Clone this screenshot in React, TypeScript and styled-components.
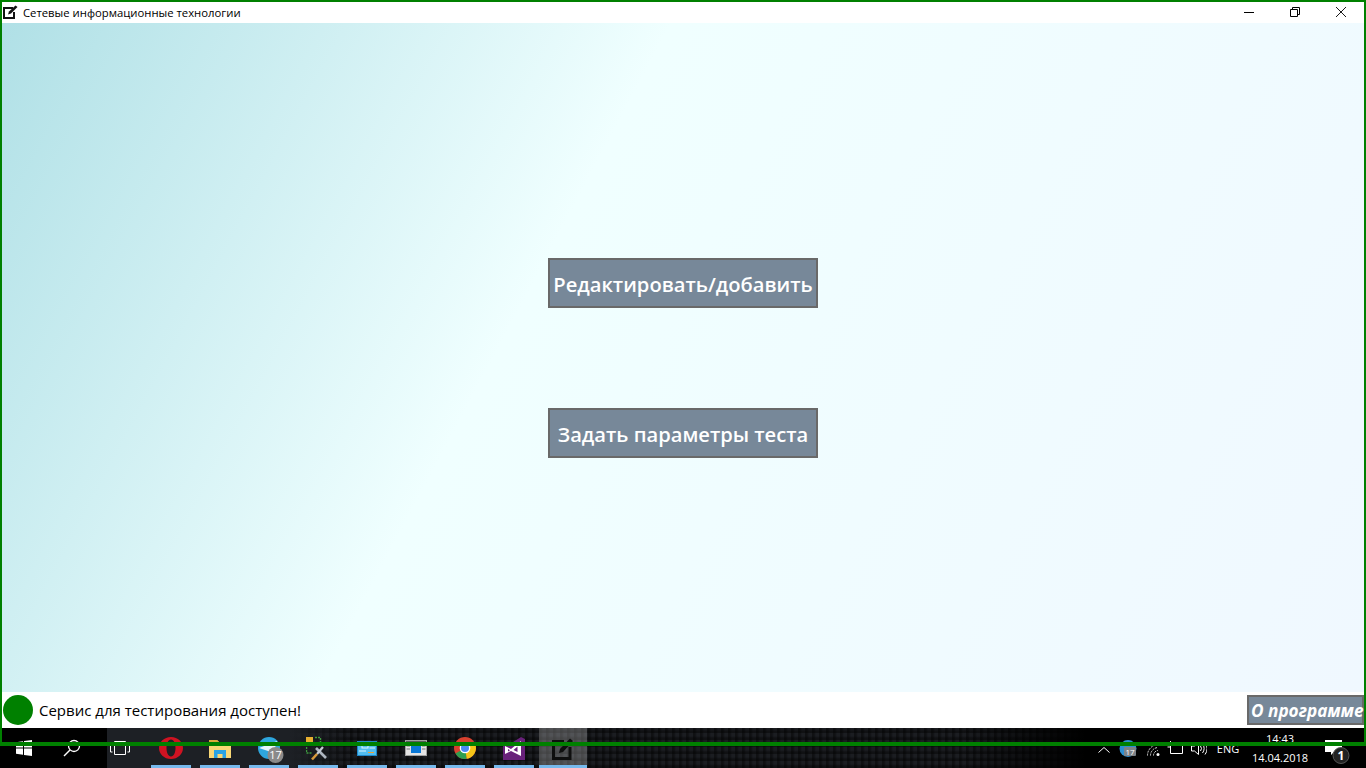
import React from "react";
import styled, { createGlobalStyle } from "styled-components";

const Global = createGlobalStyle`
  html, body { margin: 0; padding: 0; background: #000; }
  body { font-family: "Open Sans", "Noto Sans", sans-serif; }
`;

const Screen = styled.div`
  position: relative;
  width: 1366px;
  height: 768px;
  overflow: hidden;
  display: flex;
  flex-direction: column;
`;

const Frame = styled.div`
  position: absolute;
  left: 0;
  top: 0;
  width: 1366px;
  height: 746px;
  box-sizing: border-box;
  border: solid #008000;
  border-width: 2px 2px 4px 2px;
  pointer-events: none;
  z-index: 5;
`;

const Win = styled.div`
  height: 728px;
  display: flex;
  flex-direction: column;
  box-sizing: border-box;
  padding: 2px 2px 0;
  background: #fff;
`;

const TitleBar = styled.div`
  height: 21px;
  display: flex;
  align-items: center;
  background: #fff;
  color: #000;
  font-size: 11.3px;
`;

const TitleIcon = styled.svg`
  width: 17px;
  height: 17px;
  margin: 0 3px 0 1px;
  flex: none;
`;

const TitleText = styled.span`
  flex: 1;
`;

const WinCtrl = styled.div`
  width: 46px;
  height: 21px;
  display: flex;
  align-items: center;
  justify-content: center;
  margin-top: -2px;
`;

const Main = styled.main`
  flex: 1;
  display: flex;
  flex-direction: column;
  align-items: center;
  justify-content: center;
  gap: 100px;
  background: linear-gradient(118deg, #b0e0e6 0%, #f0ffff 39%, #f0f8ff 100%);
`;

const BigButton = styled.button`
  width: 270px;
  height: 50px;
  box-sizing: border-box;
  border: 2px solid #696969;
  background: #778899;
  color: #fff;
  font-family: "Open Sans", sans-serif;
  font-size: 20.15px;
  font-weight: 600;
  padding: 2px 0 0;
  white-space: nowrap;
`;

const StatusBar = styled.div`
  height: 36px;
  display: flex;
  align-items: center;
  background: #fff;
`;

const Lamp = styled.div`
  width: 30px;
  height: 30px;
  border-radius: 50%;
  background: #008000;
  margin: 0 6px 0 1px;
  flex: none;
`;

const StatusText = styled.span`
  flex: 1;
  font-size: 15px;
  color: #000;
`;

const AboutButton = styled.button`
  width: 117px;
  height: 30px;
  box-sizing: border-box;
  border: 2px solid #696969;
  background: #778899;
  color: #fff;
  font-family: "Open Sans", sans-serif;
  font-size: 17.2px;
  font-weight: 700;
  font-style: italic;
  padding: 0 0 0 2px;
  white-space: nowrap;
  text-align: left;
`;

const Taskbar = styled.div`
  height: 40px;
  display: flex;
  align-items: stretch;
  background-color: #1b1d21;
  background-image:
    linear-gradient(90deg, #1d2025 0, #1d2025 290px, rgba(29, 32, 37, 0) 350px),
    linear-gradient(90deg, rgba(0, 0, 0, 0) 960px, #000 1085px),
    repeating-linear-gradient(90deg, rgba(0, 0, 0, 0.42) 0, rgba(0, 0, 0, 0.42) 2px, rgba(0, 0, 0, 0) 4px, rgba(0, 0, 0, 0) 7px),
    repeating-linear-gradient(0deg, rgba(0, 0, 0, 0.42) 0, rgba(0, 0, 0, 0.42) 2px, rgba(0, 0, 0, 0) 4px, rgba(0, 0, 0, 0) 7px);
`;

const StartZone = styled.div`
  width: 107px;
  display: flex;
  background: #000;
`;

const SysBtn = styled.div`
  width: 48px;
  display: flex;
  align-items: center;
  justify-content: center;
  flex: none;
`;

const TaskView = styled.div`
  width: 39px;
  box-sizing: border-box;
  padding-left: 3px;
  display: flex;
  align-items: center;
  flex: none;
`;

const Tile = styled.div<{ $active?: boolean }>`
  position: relative;
  flex: none;
  display: flex;
  align-items: center;
  justify-content: center;
  background: ${(p) => (p.$active ? "rgba(255,255,255,.24)" : "transparent")};
  margin-left: ${(p) => (p.$active ? "1px" : "0")};
  width: ${(p) => (p.$active ? "48px" : "49px")};
  &::after {
    content: "";
    position: absolute;
    bottom: 0;
    height: 3px;
    left: ${(p) => (p.$active ? "0" : "5px")};
    width: ${(p) => (p.$active ? "48px" : "40px")};
    background: #76b9ed;
  }
`;

const Spacer = styled.div`
  flex: 1;
`;

const Tray = styled.div`
  display: flex;
  align-items: stretch;
  color: #fff;
  width: 271px;
  flex: none;
`;

const TrayIcon = styled.div<{ $w: number; $top: number }>`
  width: ${(p) => p.$w}px;
  flex: none;
  display: flex;
  align-items: flex-start;
  justify-content: center;
  padding-top: ${(p) => p.$top}px;
  box-sizing: border-box;
`;

const NotifyZone = styled.div`
  flex: 1;
  padding: 10px 0 0 11px;
  box-sizing: border-box;
`;

const Lang = styled.div`
  width: 36px;
  flex: none;
  font-size: 11px;
  text-align: center;
  padding-top: 13px;
  box-sizing: border-box;
`;

const Clock = styled.div`
  width: 68px;
  flex: none;
  font-size: 11px;
  line-height: 19px;
  text-align: center;
  padding-top: 1px;
  box-sizing: border-box;
`;

const IconBadgeText = styled.text`
  font-family: "Open Sans", sans-serif;
  fill: #fff;
`;

const tiles: React.ReactNode[] = [
  <svg width="24" height="22" viewBox="0 0 24 22" key="o">
    <path
      fillRule="evenodd"
      d="M12 0 C19 0 24 5 24 11 C24 17 19 22 12 22 C5 22 0 17 0 11 C0 5 5 0 12 0 Z M12 2.5 C9.2 2.5 7.5 6.5 7.5 11 C7.5 15.5 9.2 19.5 12 19.5 C14.8 19.5 16.5 15.5 16.5 11 C16.5 6.5 14.8 2.5 12 2.5 Z"
      fill="#cf1322"
    />
  </svg>,
  <svg width="22" height="19" viewBox="0 0 22 19" key="f">
    <path d="M0 1 H8 L10 3 H22 V19 H0 Z" fill="#f8d775" />
    <path d="M0 1 H8 L10 3 H22 V5 H0 Z" fill="#dca93a" />
    <path d="M5 11 H17 V19 H13.5 V15 H8.5 V19 H5 Z" fill="#29a3e4" />
  </svg>,
  <svg width="30" height="30" viewBox="0 0 30 30" key="t">
    <circle cx="15" cy="15" r="11" fill="#2ea6de" />
    <path d="M5 15 L23 8 L19 22 L14 18 Z" fill="#e8f5fb" />
    <circle cx="21.5" cy="22" r="8" fill="#8a8a8a" />
    <IconBadgeText x="21.5" y="26" fontSize="11" textAnchor="middle">17</IconBadgeText>
  </svg>,
  <svg width="24" height="25" viewBox="0 0 24 25" key="x">
    <rect x="0" y="1" width="7" height="7" fill="#e8b030" />
    <path d="M9 1.5 H14.5 V6 M0.5 11 V17 H6" fill="none" stroke="#3f9b3f" strokeWidth="1.4" strokeDasharray="2 1" />
    <path d="M10 12 L20 22" stroke="#aeb6c0" strokeWidth="2.6" />
    <path d="M17 11 L11 18" stroke="#c4ccd6" strokeWidth="2.2" />
    <path d="M11 18 L6 23.5" stroke="#d89a3a" strokeWidth="2.6" />
  </svg>,
  <svg width="20" height="15" viewBox="0 0 20 15" key="m">
    <rect x="0.5" y="0.5" width="19" height="14" fill="#52bdf0" stroke="#1e87c9" />
    <rect x="5" y="3" width="6" height="4" fill="none" stroke="#dff3fc" />
    <path d="M12.5 4 H18 M12.5 7 H18 M2 10 H9" stroke="#dff3fc" />
    <path d="M11 11.5 H17" stroke="#e9a23b" />
  </svg>,
  <svg width="22" height="16" viewBox="0 0 22 16" key="w">
    <rect x="0.5" y="0.5" width="21" height="15" fill="#e4e4e4" stroke="#a0a0a0" />
    <rect x="1" y="1" width="20" height="2" fill="#5b5b5b" />
    <rect x="6" y="5" width="10" height="8" fill="#0a78d7" />
    <path d="M1.5 6 H5 M1.5 9 H5 M17 6 H20.5 M17 9 H20.5" stroke="#777" />
  </svg>,
  <svg width="22" height="22" viewBox="0 0 24 24" key="c">
    <circle cx="12" cy="12" r="12" fill="#d8412f" />
    <path d="M12 12 L1.6 18 A12 12 0 0 0 14 23.8 Z" fill="#2e9e4f" />
    <path d="M12 12 L14 23.8 A12 12 0 0 0 23.3 8 L12 8 Z" fill="#f5c518" />
    <circle cx="12" cy="12" r="5.8" fill="#fff" />
    <circle cx="12" cy="12" r="4.4" fill="#4a8af4" />
  </svg>,
  <svg width="22" height="23" viewBox="0 0 22 23" key="v">
    <path d="M0 5 L7 7 L18 0 L22 2 V23 H0 Z" fill="#68217a" />
    <path fillRule="evenodd" d="M2 9 L8 12 L18 4 V19 L8 14 L2 17 Z M5 12 V14.5 L7 13.2 Z M14.5 9.5 L10.5 13 L14.5 15 Z" fill="#fff" />
  </svg>,
  <svg width="22" height="23" viewBox="0 0 22 23" key="n">
    <path d="M12 4.5 H1.5 V21.5 H18 V10" fill="none" stroke="#0e0e0e" strokeWidth="3" />
    <path d="M7 16 L8 12 L18 1.5 L21 4 L11 15 Z" fill="#0e0e0e" />
  </svg>,
];

export default function App() {
  return (
    <Screen>
      <Global />
      <Win>
        <TitleBar>
          <TitleIcon viewBox="0 0 17 17">
            <path d="M10 4 H1 V14 H11 V8" fill="none" stroke="#111" strokeWidth="2" />
            <path d="M5 10.5 L6 7.5 L12.5 1.5 L14.5 3 L8 9.5 Z" fill="#111" />
          </TitleIcon>
          <TitleText>Сетевые информационные технологии</TitleText>
          <WinCtrl>
            <svg width="10" height="10" viewBox="0 0 10 10">
              <path d="M0 5.5 H10" stroke="#000" />
            </svg>
          </WinCtrl>
          <WinCtrl>
            <svg width="10" height="10" viewBox="0 0 10 10">
              <path d="M0.5 2.5 H7.5 V9.5 H0.5 Z M2.5 2.5 V0.5 H9.5 V7.5 H7.5" fill="none" stroke="#000" />
            </svg>
          </WinCtrl>
          <WinCtrl>
            <svg width="10" height="10" viewBox="0 0 10 10">
              <path d="M0 0 L10 10 M10 0 L0 10" stroke="#000" strokeWidth="0.9" />
            </svg>
          </WinCtrl>
        </TitleBar>
        <Main>
          <BigButton>Редактировать/добавить</BigButton>
          <BigButton>Задать параметры теста</BigButton>
        </Main>
        <StatusBar>
          <Lamp />
          <StatusText>Сервис для тестирования доступен!</StatusText>
          <AboutButton>О программе</AboutButton>
        </StatusBar>
      </Win>
      <Taskbar>
        <StartZone>
          <SysBtn>
            <svg width="16" height="16" viewBox="0 0 16 16">
              <path d="M0 2.2 L7 1.2 V7.5 H0 Z M8 1 L16 0 V7.5 H8 Z M0 8.5 H7 V14.8 L0 13.8 Z M8 8.5 H16 V16 L8 15 Z" fill="#fff" />
            </svg>
          </SysBtn>
          <SysBtn>
            <svg width="18" height="18" viewBox="0 0 18 18">
              <circle cx="11" cy="7" r="5.5" fill="none" stroke="#fff" strokeWidth="1.3" />
              <path d="M7 11 L1 17" stroke="#fff" strokeWidth="1.5" />
            </svg>
          </SysBtn>
        </StartZone>
        <TaskView>
          <svg width="20" height="16" viewBox="0 0 20 16">
            <path d="M4.5 1.5 H15.5 V14.5 H4.5 Z" fill="none" stroke="#fff" />
            <path d="M2.5 3 H0.5 V12 H2.5 M17.5 3 H19.5 V12 H17.5" fill="none" stroke="#fff" />
          </svg>
        </TaskView>
        {tiles.map((icon, i) => (
          <Tile key={i} $active={i === tiles.length - 1}>
            {icon}
          </Tile>
        ))}
        <Spacer />
        <Tray>
          <TrayIcon $w={17} $top={19}>
            <svg width="12" height="6" viewBox="0 0 12 6">
              <path d="M0.5 5.5 L6 0.5 L11.5 5.5" fill="none" stroke="#fff" />
            </svg>
          </TrayIcon>
          <TrayIcon $w={32} $top={12}>
            <svg width="18" height="17" viewBox="0 0 18 17">
              <circle cx="9" cy="8.5" r="8.5" fill="#2b8fd1" />
              <rect x="5" y="7" width="12" height="9" rx="1" fill="#7c8288" />
              <IconBadgeText x="11" y="14.5" fontSize="8" textAnchor="middle">17</IconBadgeText>
            </svg>
          </TrayIcon>
          <TrayIcon $w={18} $top={16}>
            <svg width="13" height="12" viewBox="0 0 13 12">
              <path d="M0.5 11.5 A11 11 0 0 1 11 0.5 M3.5 11.5 A8 8 0 0 1 11 3.5 M6.5 11.5 A5 5 0 0 1 11 6.5" fill="none" stroke="#ddd" strokeDasharray="2 1" />
              <circle cx="11" cy="10.5" r="1.5" fill="#fff" />
            </svg>
          </TrayIcon>
          <TrayIcon $w={26} $top={13}>
            <svg width="16" height="13" viewBox="0 0 16 13">
              <path d="M3.5 0 V12.5 H15.5 V4.5 H3.5 M0.5 3 H3.5 M0.5 6 H3.5" fill="none" stroke="#fff" />
            </svg>
          </TrayIcon>
          <TrayIcon $w={22} $top={13}>
            <svg width="16" height="15" viewBox="0 0 16 15">
              <path d="M0.5 5 H3.5 L7.5 1.5 V13.5 L3.5 10 H0.5 Z" fill="none" stroke="#fff" />
              <path d="M9.5 5 A4 4 0 0 1 9.5 10 M11.5 3 A7 7 0 0 1 11.5 12 M14 1.5 A9.5 9.5 0 0 1 14 13.5" fill="none" stroke="#fff" />
            </svg>
          </TrayIcon>
          <Lang>ENG</Lang>
          <Clock>
            14:43
            <br />
            14.04.2018
          </Clock>
          <NotifyZone>
            <svg width="26" height="28" viewBox="0 0 26 28">
              <path d="M0 2 H17 V14 H9 L6 17 V14 H0 Z" fill="#fff" />
              <circle cx="16" cy="17.5" r="8" fill="#222" stroke="#555" />
              <IconBadgeText x="16" y="22" fontSize="12" fontWeight="700" textAnchor="middle">1</IconBadgeText>
            </svg>
          </NotifyZone>
        </Tray>
      </Taskbar>
      <Frame />
    </Screen>
  );
}
